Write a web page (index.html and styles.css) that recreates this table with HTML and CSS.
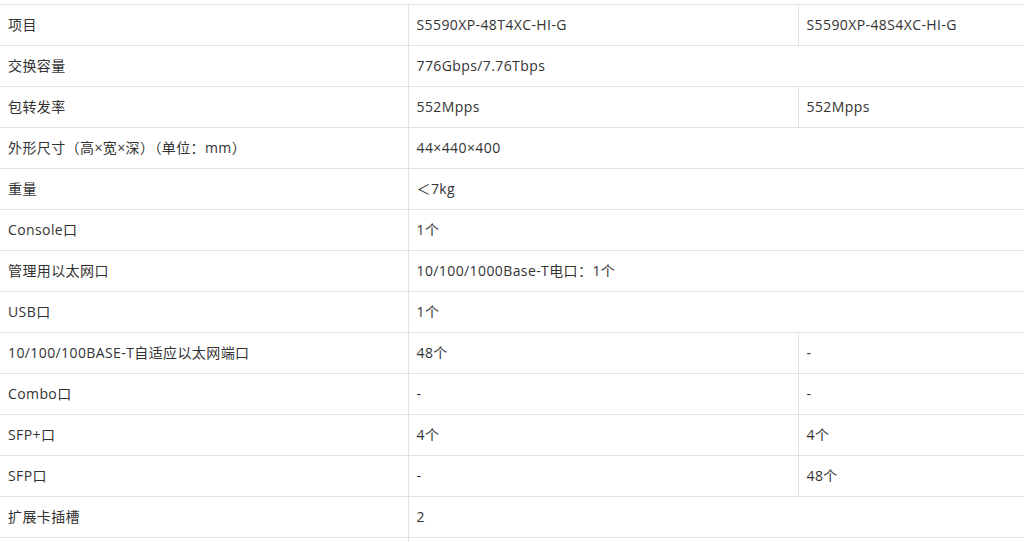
FILE: index.html
```html
<!DOCTYPE html>
<html lang="zh-CN">
<head>
<meta charset="utf-8">
<title>规格</title>
<link rel="stylesheet" href="styles.css">
</head>
<body>
<table class="spec">
  <colgroup>
    <col class="c1">
    <col class="c2">
    <col class="c3">
  </colgroup>
  <tbody>
    <tr><td>项目</td><td>S5590XP-48T4XC-HI-G</td><td>S5590XP-48S4XC-HI-G</td></tr>
    <tr><td>交换容量</td><td colspan="2">776Gbps/7.76Tbps</td></tr>
    <tr><td>包转发率</td><td>552Mpps</td><td>552Mpps</td></tr>
    <tr><td>外形尺寸（高×宽×深）（单位：mm）</td><td colspan="2">44×440×400</td></tr>
    <tr><td>重量</td><td colspan="2">＜7kg</td></tr>
    <tr><td>Console口</td><td colspan="2">1个</td></tr>
    <tr><td>管理用以太网口</td><td colspan="2">10/100/1000Base-T电口：1个</td></tr>
    <tr><td>USB口</td><td colspan="2">1个</td></tr>
    <tr><td>10/100/100BASE-T自适应以太网端口</td><td>48个</td><td>-</td></tr>
    <tr><td>Combo口</td><td>-</td><td>-</td></tr>
    <tr><td>SFP+口</td><td>4个</td><td>4个</td></tr>
    <tr><td>SFP口</td><td>-</td><td>48个</td></tr>
    <tr><td>扩展卡插槽</td><td colspan="2">2</td></tr>
    <tr class="cut"><td>&nbsp;</td><td colspan="2">&nbsp;</td></tr>
  </tbody>
</table>
</body>
</html>
```
FILE: styles.css
```css
html, body {
  margin: 0;
  padding: 0;
  background: #fff;
  overflow: hidden;
}
body {
  height: 542px;
  padding-top: 4px;
  box-sizing: border-box;
  font-family: "Open Sans", "Noto Sans CJK SC", sans-serif;
  font-size: 14px;
  letter-spacing: 0.4px;
  color: #333;
}
.spec {
  border-collapse: collapse;
  table-layout: fixed;
  width: 1040px;
}
.c1 { width: 408px; }
.c2 { width: 390px; }
.c3 { width: 242px; }
.spec td {
  border: 1px solid #e2e2e2;
  height: 41px;
  padding: 0 8px;
  box-sizing: border-box;
  vertical-align: middle;
  white-space: nowrap;
  line-height: 20px;
}
.spec td:first-child {
  border-left: none;
}
```
